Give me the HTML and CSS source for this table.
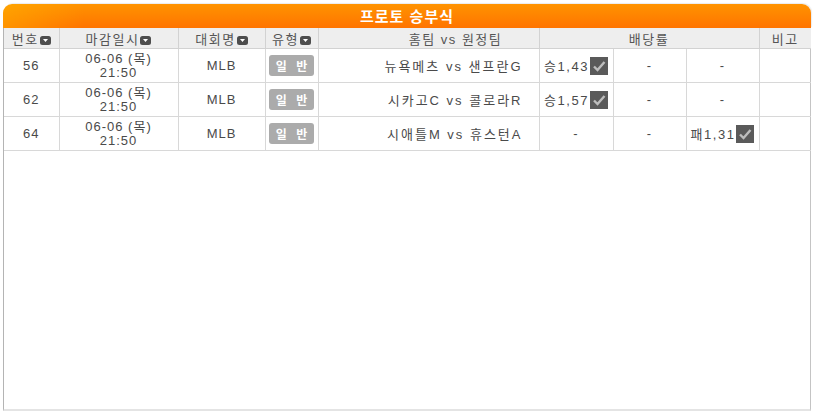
FILE: index.html
```html
<!DOCTYPE html>
<html lang="ko">
<head>
<meta charset="utf-8">
<title>프로토 승부식</title>
<link rel="stylesheet" href="styles.css">
</head>
<body>
<div class="board">
  <div class="title">프로토 승부식</div>
  <div class="panel">
    <table class="grid">
      <colgroup>
        <col class="c-no"><col class="c-date"><col class="c-league"><col class="c-type"><col class="c-team">
        <col class="c-odd"><col class="c-odd2"><col class="c-odd2"><col class="c-note">
      </colgroup>
      <thead>
        <tr>
          <th>번호<svg class="sort" viewBox="0 0 11 9"><rect width="11" height="9" rx="2.5" fill="#4d4d4d"/><path d="M3 3h5l-2.5 3z" fill="#fff"/></svg></th>
          <th>마감일시<svg class="sort" viewBox="0 0 11 9"><rect width="11" height="9" rx="2.5" fill="#4d4d4d"/><path d="M3 3h5l-2.5 3z" fill="#fff"/></svg></th>
          <th>대회명<svg class="sort" viewBox="0 0 11 9"><rect width="11" height="9" rx="2.5" fill="#4d4d4d"/><path d="M3 3h5l-2.5 3z" fill="#fff"/></svg></th>
          <th>유형<svg class="sort" viewBox="0 0 11 9"><rect width="11" height="9" rx="2.5" fill="#4d4d4d"/><path d="M3 3h5l-2.5 3z" fill="#fff"/></svg></th>
          <th class="h-team">홈팀 vs 원정팀</th>
          <th colspan="3">배당률</th>
          <th>비고</th>
        </tr>
      </thead>
      <tbody>
        <tr>
          <td>56</td>
          <td class="date">06-06 (목)<br>21:50</td>
          <td>MLB</td>
          <td><span class="badge">일 반</span></td>
          <td class="team">뉴욕메츠 vs 샌프란G</td>
          <td><span class="odd">승1,43<svg class="chk" viewBox="0 0 18 18"><rect width="18" height="18" fill="#5a5a5a"/><path d="M4 9.5l3.5 3.5L14.5 5" fill="none" stroke="#bdbdbd" stroke-width="2.4"/></svg></span></td>
          <td>-</td>
          <td>-</td>
          <td></td>
        </tr>
        <tr>
          <td>62</td>
          <td class="date">06-06 (목)<br>21:50</td>
          <td>MLB</td>
          <td><span class="badge">일 반</span></td>
          <td class="team">시카고C vs 콜로라R</td>
          <td><span class="odd">승1,57<svg class="chk" viewBox="0 0 18 18"><rect width="18" height="18" fill="#5a5a5a"/><path d="M4 9.5l3.5 3.5L14.5 5" fill="none" stroke="#bdbdbd" stroke-width="2.4"/></svg></span></td>
          <td>-</td>
          <td>-</td>
          <td></td>
        </tr>
        <tr>
          <td>64</td>
          <td class="date">06-06 (목)<br>21:50</td>
          <td>MLB</td>
          <td><span class="badge">일 반</span></td>
          <td class="team">시애틀M vs 휴스턴A</td>
          <td>-</td>
          <td>-</td>
          <td><span class="odd">패1,31<svg class="chk" viewBox="0 0 18 18"><rect width="18" height="18" fill="#5a5a5a"/><path d="M4 9.5l3.5 3.5L14.5 5" fill="none" stroke="#bdbdbd" stroke-width="2.4"/></svg></span></td>
          <td></td>
        </tr>
      </tbody>
    </table>
  </div>
</div>
</body>
</html>
```

FILE: styles.css
```css
html, body {
  margin: 0;
  padding: 0;
  background: #fff;
}

body {
  font-family: "Liberation Sans", "Noto Sans CJK KR", sans-serif;
  font-size: 13px;
  color: #4a4a4a;
}

.board {
  width: 808px;
  height: 407px;
  padding: 4px 0 0 3px;
  display: flex;
  flex-direction: column;
}

.title {
  height: 24px;
  flex: none;
  border-radius: 9px 9px 0 0;
  background:
    linear-gradient(to right, rgba(255, 185, 0, 0.45), rgba(255, 170, 0, 0) 10%),
    linear-gradient(#ff9300, #ff7400);
  color: #fff;
  font-family: "Noto Sans CJK KR", sans-serif;
  font-weight: bold;
  font-size: 15px;
  line-height: 23px;
  text-align: center;
  letter-spacing: 1px;
  box-shadow: 1px -1px 1px rgba(0, 0, 0, 0.08);
}

.panel {
  flex: 1;
  border-left: 1px solid #b4b4b4;
  border-right: 1px solid #c4c4c4;
  border-bottom: 2px solid #e4e4e4;
  background: #fff;
}

.grid {
  width: 807px;
  border-collapse: collapse;
  table-layout: fixed;
}

.c-no { width: 55px; }
.c-date { width: 119px; }
.c-league { width: 87px; }
.c-type { width: 53px; }
.c-team { width: 221px; }
.c-odd { width: 74px; }
.c-odd2 { width: 73px; }
.c-note { width: 52px; }

.grid th {
  height: 20px;
  padding: 0;
  background: #eeeeee;
  color: #555;
  font-weight: normal;
  font-size: 13px;
  letter-spacing: 1.5px;
  border: 1px solid #d2d2d2;
  border-top: 0;
  white-space: nowrap;
  text-align: center;
}

.grid th:first-child,
.grid td:first-child { border-left: 0; }

.grid th:last-child,
.grid td:last-child { border-right: 0; }

.grid th.h-team { padding-left: 54px; }

.sort {
  width: 11px;
  height: 9px;
  margin-left: 1px;
  vertical-align: -1px;
}

.grid td {
  height: 33px;
  padding: 0;
  text-align: center;
  border: 1px solid #d8d8d8;
  letter-spacing: 1px;
  white-space: nowrap;
}

.grid td.date {
  line-height: 14px;
  letter-spacing: 1px;
}

.grid td.team {
  text-align: right;
  padding-right: 16px;
  letter-spacing: 2px;
}

.badge {
  display: inline-block;
  width: 45px;
  height: 21px;
  line-height: 21px;
  background: #ababab;
  color: #fff;
  font-family: "Noto Sans CJK KR", sans-serif;
  font-weight: bold;
  font-size: 12px;
  letter-spacing: 3px;
  border-radius: 3px;
  text-indent: 3px;
}

.odd {
  display: inline-flex;
  align-items: center;
  gap: 1px;
  letter-spacing: 1.5px;
}

.chk {
  width: 18px;
  height: 18px;
}
```
